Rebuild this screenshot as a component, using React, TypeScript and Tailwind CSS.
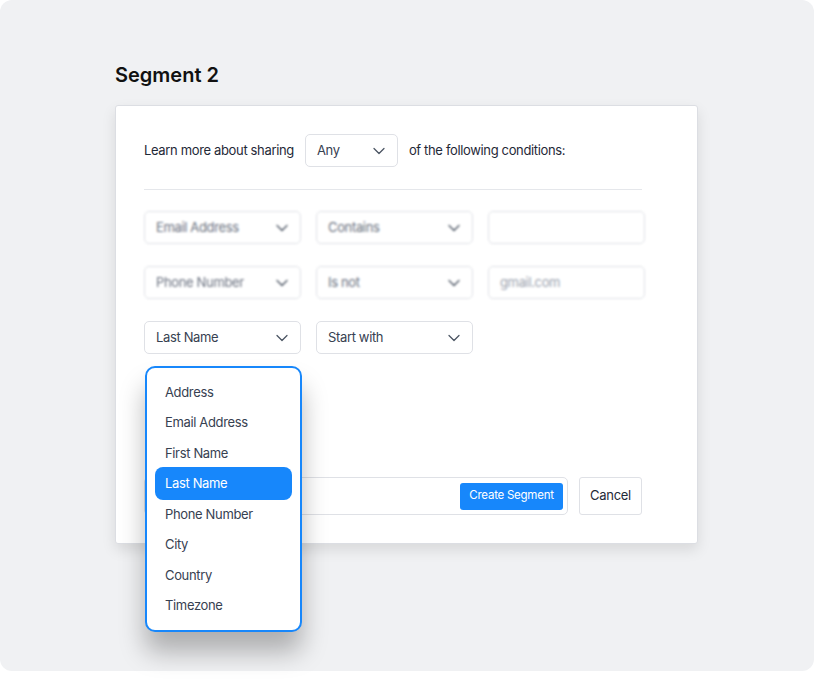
import React from "react";
import { ChevronDown } from "lucide-react";

const fieldOptions = [
  "Address",
  "Email Address",
  "First Name",
  "Last Name",
  "Phone Number",
  "City",
  "Country",
  "Timezone",
];

const Select = ({ label, width, blurred }: { label: string; width: string; blurred?: boolean }) => (
  <div
    className={`${width} h-[33px] flex items-center justify-between pl-[11px] pr-[8px] bg-white border border-[#dfe1e6] rounded-[5px] text-[13px] tracking-[-0.35px] ${
      blurred ? "text-[#6b7280]" : "text-[#374151]"
    }`}
  >
    <span>{label}</span>
    <ChevronDown size={20} strokeWidth={1.5} className="text-[#4b5563]" />
  </div>
);

const Input = ({ placeholder }: { placeholder?: string }) => (
  <div className="w-[157px] h-[33px] flex items-center px-[11px] bg-white border border-[#dfe1e6] rounded-[5px] text-[13px] tracking-[-0.35px] text-[#9ca3af]">
    {placeholder}
  </div>
);

const App: React.FC = () => {
  return (
    <div className="w-[814px] h-[679px] bg-white font-['Inter',sans-serif]">
      <div className="w-[814px] h-[671px] bg-[#f0f1f3] rounded-[12px] pt-[63px] pl-[115px]">
        <h1 className="text-[20px] leading-[24px] font-semibold text-[#111111] mb-[18px]">Segment 2</h1>

        <div className="relative w-[583px] bg-white border border-[#dcdee3] rounded-[3px] shadow-[0_6px_14px_rgba(0,0,0,0.10)] pt-[28px] pb-[28px] pl-[28px]">
          {/* match condition */}
          <div className="flex items-center text-[13px] tracking-[-0.35px] text-[#1f2937]">
            <span>Learn more about sharing</span>
            <div className="ml-[11px]">
              <Select label="Any" width="w-[93px]" />
            </div>
            <span className="ml-[11px]">of the following conditions:</span>
          </div>

          <div className="w-[498px] h-px bg-[#e5e7eb] mt-[22px] mb-[21px]" />

          {/* blurred rules */}
          <div className="blur-[1.2px] flex flex-col gap-[22px]">
            <div className="flex gap-[15px]">
              <Select label="Email Address" width="w-[157px]" blurred />
              <Select label="Contains" width="w-[157px]" blurred />
              <Input />
            </div>
            <div className="flex gap-[15px]">
              <Select label="Phone Number" width="w-[157px]" blurred />
              <Select label="Is not" width="w-[157px]" blurred />
              <Input placeholder="gmail.com" />
            </div>
          </div>

          <div className="flex gap-[15px] mt-[22px]">
            <Select label="Last Name" width="w-[157px]" />
            <Select label="Start with" width="w-[157px]" />
          </div>

          {/* actions */}
          <div className="flex items-center gap-[11px] mt-[123px]">
            <div className="w-[424px] h-[38px] bg-white border border-[#dfe1e6] rounded-[5px] flex items-center justify-end pr-[4px]">
              <button className="w-[103px] h-[27px] bg-[#1787fb] rounded-[3px] text-white text-[11.5px] tracking-[-0.25px]">
                Create Segment
              </button>
            </div>
            <button className="w-[63px] h-[38px] bg-white border border-[#dfe1e6] rounded-[3px] text-[13px] tracking-[-0.3px] text-[#1f2937]">
              Cancel
            </button>
          </div>

          {/* open field menu */}
          <div className="absolute left-[29px] top-[260px] w-[157px] bg-white border-2 border-[#1787fb] rounded-[10px] shadow-[0_20px_26px_rgba(0,0,0,0.28)] py-[9px] px-[8px]">
            {fieldOptions.map((opt) =>
              opt === "Last Name" ? (
                <div
                  key={opt}
                  className="h-[33px] -my-[1.25px] flex items-center pl-[10px] rounded-[8px] bg-[#1787fb] text-white text-[13px] tracking-[-0.35px]"
                >
                  {opt}
                </div>
              ) : (
                <div key={opt} className="h-[30.5px] flex items-center pl-[10px] text-[13px] tracking-[-0.35px] text-[#374151]">
                  {opt}
                </div>
              )
            )}
          </div>
        </div>
      </div>
    </div>
  );
};

export default App;
